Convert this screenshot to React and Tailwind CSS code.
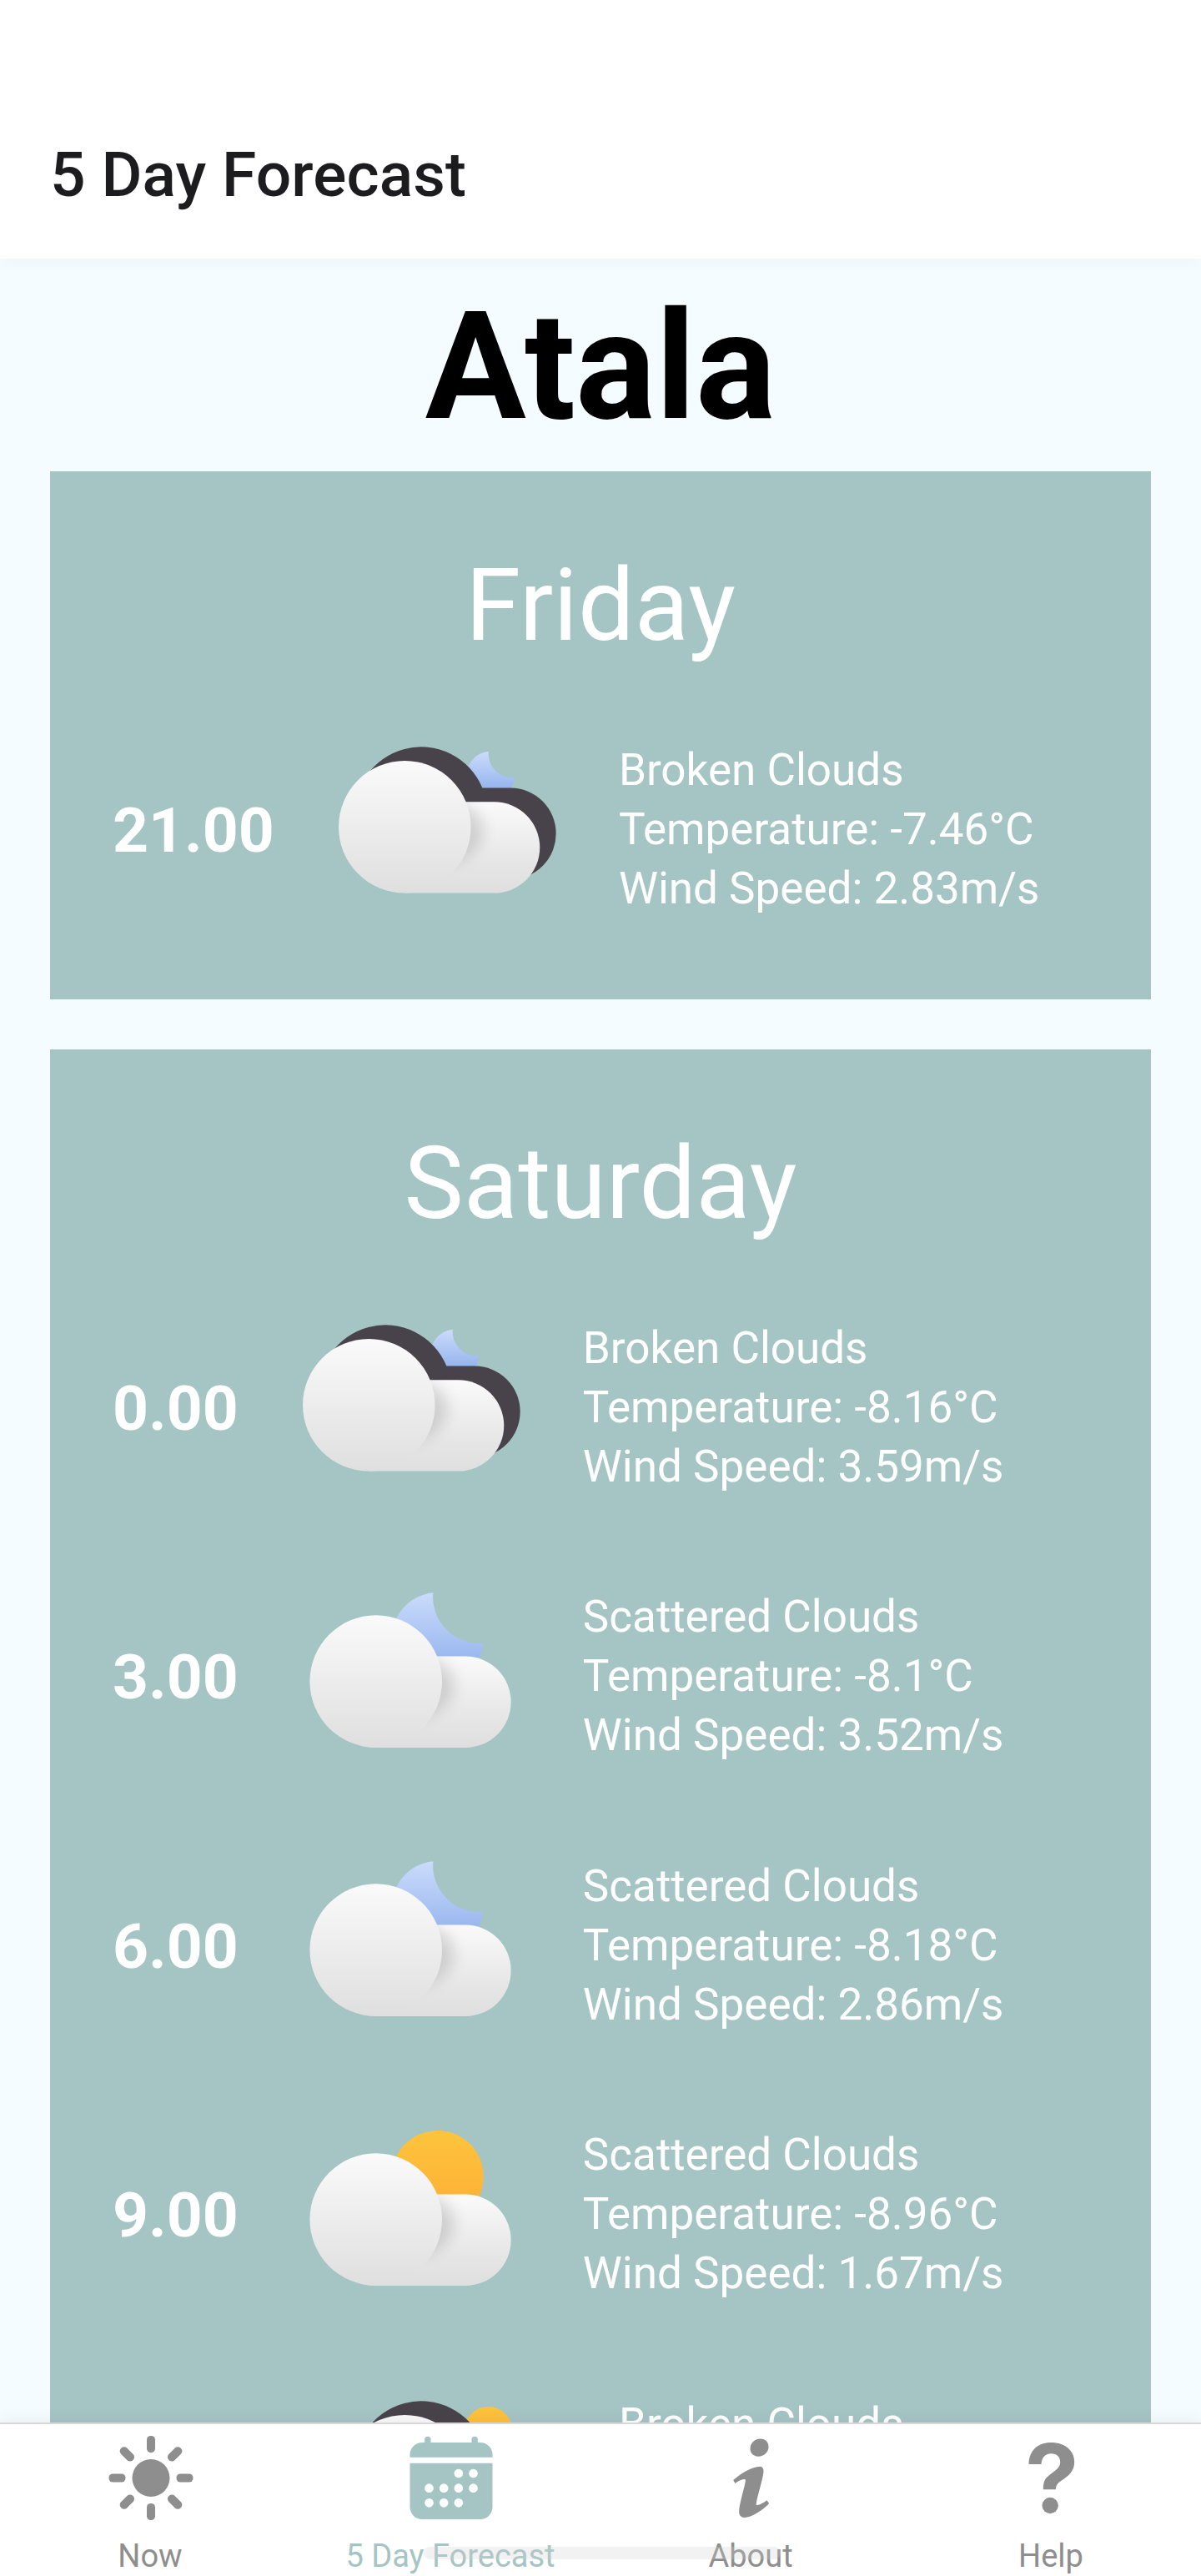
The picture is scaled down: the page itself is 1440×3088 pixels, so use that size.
const CLOUD =
  'M79.3 158.6 A79.3 79.3 0 1 1 153 49.3 H186.6 A54.65 54.65 0 0 1 186.6 158.6 Z';
const SMALL = 'M79.3 49.3 H186.6 A54.65 54.65 0 0 1 186.6 158.6 H79.3 Z';

function Cloud({ id, x, y }) {
  return (
    <g transform={`translate(${x} ${y})`}>
      <defs>
        <linearGradient id={`${id}-big`} x1="0" y1="0" x2="0" y2="158.6" gradientUnits="userSpaceOnUse">
          <stop offset="0" stopColor="#fafafa" />
          <stop offset="1" stopColor="#dfdfdf" />
        </linearGradient>
        <linearGradient id={`${id}-small`} x1="0" y1="49" x2="0" y2="158.6" gradientUnits="userSpaceOnUse">
          <stop offset="0" stopColor="#fafafa" />
          <stop offset="0.7" stopColor="#e5e5e5" />
          <stop offset="1" stopColor="#dfdfdf" />
        </linearGradient>
        <filter id={`${id}-blur`} x="-50%" y="-50%" width="200%" height="200%">
          <feGaussianBlur stdDeviation="9" />
        </filter>
        <clipPath id={`${id}-clip`}>
          <path d={SMALL} />
        </clipPath>
      </defs>
      <path d={SMALL} fill={`url(#${id}-small)`} />
      <g clipPath={`url(#${id}-clip)`}>
        <ellipse cx="112" cy="84" rx="61" ry="41" fill="#000" opacity="0.14" filter={`url(#${id}-blur)`} />
      </g>
      <circle cx="79.3" cy="79.3" r="79.3" fill={`url(#${id}-big)`} />
    </g>
  );
}

function WeatherIcon({ id, kind, night }) {
  const broken = kind === 'broken';
  return (
    <svg className="h-[300px] w-[300px] shrink-0" viewBox="0 0 300 300" aria-hidden="true">
      <defs>
        <linearGradient id={`${id}-moon`} x1="0" y1="0" x2="0" y2="1">
          <stop offset="0" stopColor="#cbdcfb" />
          <stop offset="1" stopColor="#86a9ea" />
        </linearGradient>
        <linearGradient id={`${id}-sun`} x1="0" y1="0" x2="0" y2="1">
          <stop offset="0" stopColor="#fdc43c" />
          <stop offset="1" stopColor="#fdad36" />
        </linearGradient>
      </defs>
      {broken && night && (
        <path d="M200.7 56.7 A29 29 0 1 0 232.3 88.3 A29 29 0 0 1 200.7 56.7 Z" fill={`url(#${id}-moon)`} />
      )}
      {broken && !night && <circle cx="200.5" cy="87" r="29" fill={`url(#${id}-sun)`} />}
      {!broken && night && (
        <path d="M177.4 49.3 A55 55 0 1 0 237.4 109.7 A55.3 55.3 0 0 1 177.4 49.3 Z" fill={`url(#${id}-moon)`} />
      )}
      {!broken && !night && <circle cx="182.7" cy="104" r="55" fill={`url(#${id}-sun)`} />}
      {broken && (
        <g transform="translate(40.4 51.3)">
          <path d={CLOUD} fill="#48434a" />
        </g>
      )}
      <Cloud id={id} x={broken ? 21 : 29.4} y={broken ? 68 : 76.3} />
    </svg>
  );
}

const days = [
  {
    name: 'Friday',
    rows: [{ time: '21.00', kind: 'broken', night: true, label: 'Broken Clouds', temp: '-7.46', wind: '2.83' }],
  },
  {
    name: 'Saturday',
    rows: [
      { time: '0.00', kind: 'broken', night: true, label: 'Broken Clouds', temp: '-8.16', wind: '3.59' },
      { time: '3.00', kind: 'scattered', night: true, label: 'Scattered Clouds', temp: '-8.1', wind: '3.52' },
      { time: '6.00', kind: 'scattered', night: true, label: 'Scattered Clouds', temp: '-8.18', wind: '2.86' },
      { time: '9.00', kind: 'scattered', night: false, label: 'Scattered Clouds', temp: '-8.96', wind: '1.67' },
      { time: '12.00', kind: 'broken', night: false, label: 'Broken Clouds' },
    ],
  },
];

function SunIcon({ className }) {
  return (
    <svg className={className} viewBox="7.5 39 405 405" fill="currentColor" aria-hidden="true">
      <circle cx="211.5" cy="241.5" r="67.5" />
      {[0, 45, 90, 135, 180, 225, 270, 315].map((a) => (
        <rect key={a} x="196.5" y="90" width="30" height="60" rx="14" transform={`rotate(${a} 211.5 241.5)`} />
      ))}
    </svg>
  );
}

const dots = [
  [448, 225], [501, 225],
  [342, 278], [395, 278], [448, 278], [501, 278],
  [342, 331], [395, 331], [448, 331],
];

function CalendarIcon({ className }) {
  return (
    <svg className={className} viewBox="217.5 39 405 405" fill="currentColor" aria-hidden="true">
      <path d="M273 167 V158 A44 44 0 0 1 317 114 H326 V103 A11 11 0 0 1 348 103 V114 H495 V103 A11 11 0 0 1 517 103 V114 H526 A44 44 0 0 1 570 158 V167 Z" />
      <path d="M273 188.500 H570 V346 A44 44 0 0 1 526 390 H317 A44 44 0 0 1 273 346 Z" />
      {dots.map(([x, y]) => (
        <circle key={`${x}-${y}`} cx={x} cy={y} r="16" fill="#fff" />
      ))}
    </svg>
  );
}

function InfoIcon({ className }) {
  return (
    <svg className={className} viewBox="97.5 39 405 405" fill="currentColor" aria-hidden="true">
      <path d="M333 100.500 C351 100 363 112 363 129 C363 149 347 164 326 164 C308 164 297 152 297 136 C297 116 313 101 333 100.500 Z" />
      <path d="M236 249 C262 226 303 200 333 200 C342 201 346 208 345 219 C343 245 323 305 319 332 C318 337 319 340 323 339 C335 337 346 330 357 322 L365 333 C341 359 302 383 276 384 C262 384 256 373 257 358 C259 330 277 275 280 252 C281 247 279 245 274 246 C262 248 252 254 243 261 Z" />
    </svg>
  );
}

function HelpIcon({ className }) {
  return (
    <svg className={className} viewBox="97.5 39 405 405" fill="currentColor" aria-hidden="true">
      <path d="M219 192 C220 143 251 114 299 114 C347 114 383 141 383 184 C383 211 369 229 345 245 C327 257 317 264 316 283 H271 C271 263 274 249 284 239 C304 220 332 209 332 186 C332 165 320 154 299 154 C278 154 265 169 264 192 Z" />
      <circle cx="296" cy="340.500" r="29" />
    </svg>
  );
}

const tabs = [
  { label: 'Now', Icon: SunIcon },
  { label: '5 Day Forecast', Icon: CalendarIcon, active: true },
  { label: 'About', Icon: InfoIcon },
  { label: 'Help', Icon: HelpIcon },
];

function DayCard({ day }) {
  return (
    <section className="mb-[60px] bg-[#a5c4c4] px-[75px] pb-[42.5px] text-white">
      <h2 className="h-[268px] pt-[81px] text-center text-[120px] leading-[160px] tracking-[0.1px]">{day.name}</h2>
      {day.rows.map((row) => (
        <div key={row.time} className="flex h-[322.5px] items-center gap-[56.5px]">
          <div className="pt-px text-[75px] font-bold leading-[100px]">{row.time}</div>
          <WeatherIcon id={`${day.name}-${row.time.replace('.', '')}`} kind={row.kind} night={row.night} />
          <div className="h-[213px] whitespace-nowrap text-[53px] leading-[71px]">
            <p>{row.label}</p>
            {row.temp && <p>Temperature: {row.temp}°C</p>}
            {row.wind && <p>Wind Speed: {row.wind}m/s</p>}
          </div>
        </div>
      ))}
    </section>
  );
}

export default function App() {
  return (
    <div className="relative flex h-[3088px] w-[1440px] flex-col overflow-hidden bg-[#f5fcff] font-['Roboto',sans-serif]">
      <header className="z-10 h-[310px] shrink-0 bg-white px-[60px] pt-[159px] shadow-[0_4px_16px_rgba(60,60,90,0.035)]">
        <h1 className="text-[75px] font-medium leading-[100px] tracking-[0.1px] text-[#1c1c1e]">5 Day Forecast</h1>
      </header>
      <main className="min-h-0 flex-1 overflow-hidden px-[60px]">
        <div className="h-[255px] pt-[10px] text-center text-[180px] font-bold leading-[240px] text-black">Atala</div>
        {days.map((day) => (
          <DayCard key={day.name} day={day} />
        ))}
      </main>
      <nav className="z-10 grid h-[184px] shrink-0 grid-cols-4 border-t-2 border-[#d8d8d8] bg-white shadow-[0_-4px_16px_rgba(60,60,90,0.06)]">
        {tabs.map(({ label, Icon, active }) => (
          <div
            key={label}
            className={`flex flex-col items-center whitespace-nowrap ${active ? 'text-[#a5c4c4]' : 'text-[#8e8e8f]'}`}
          >
            <Icon className="-mt-[3px] h-[135px] w-[135px] shrink-0" />
            <span className="mt-[1px] text-[38px] leading-[50px]">{label}</span>
          </div>
        ))}
      </nav>
      <div className="absolute bottom-[20px] left-[508px] z-20 h-[15px] w-[428px] rounded-full bg-[rgba(206,206,206,0.27)]" />
    </div>
  );
}
